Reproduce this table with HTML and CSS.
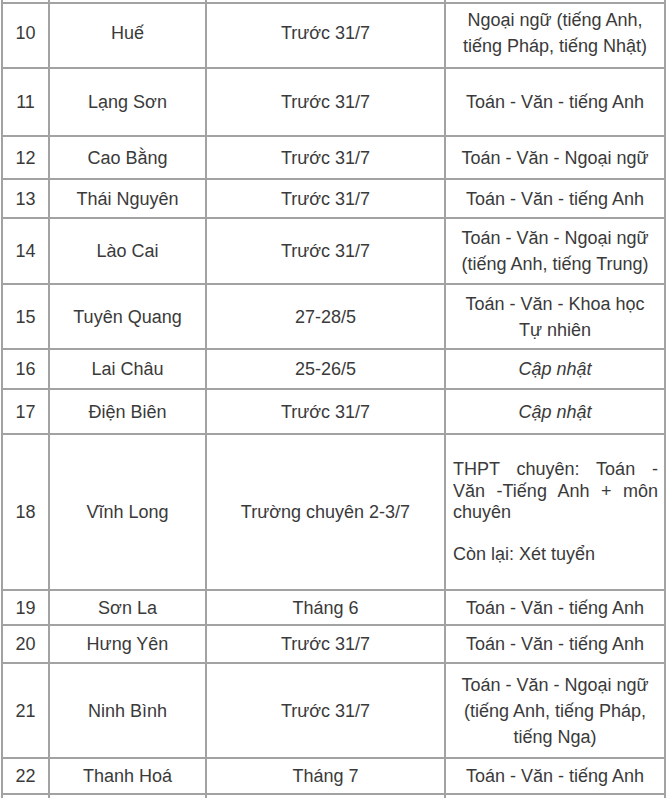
FILE: index.html
```html
<!DOCTYPE html>
<html lang="vi">
<head>
<meta charset="utf-8">
<title>Lịch thi</title>
<link rel="stylesheet" href="styles.css">
</head>
<body>
<div class="sheet">
<table class="grid">
<colgroup><col class="c1"><col class="c2"><col class="c3"><col class="c4"></colgroup>
<tbody>
<tr class="ghost"><td></td><td></td><td></td><td></td></tr>
<tr class="h65 lift"><td>10</td><td>Huế</td><td>Trước 31/7</td><td>Ngoại ngữ (tiếng Anh,<br>tiếng Pháp, tiếng Nhật)</td></tr>
<tr class="h68"><td>11</td><td>Lạng Sơn</td><td>Trước 31/7</td><td>Toán - Văn - tiếng Anh</td></tr>
<tr class="h43"><td>12</td><td>Cao Bằng</td><td>Trước 31/7</td><td>Toán - Văn - Ngoại ngữ</td></tr>
<tr class="h39"><td>13</td><td>Thái Nguyên</td><td>Trước 31/7</td><td>Toán - Văn - tiếng Anh</td></tr>
<tr class="h66"><td>14</td><td>Lào Cai</td><td>Trước 31/7</td><td>Toán - Văn - Ngoại ngữ<br>(tiếng Anh, tiếng Trung)</td></tr>
<tr class="h65"><td>15</td><td>Tuyên Quang</td><td>27-28/5</td><td>Toán - Văn - Khoa học<br>Tự nhiên</td></tr>
<tr class="h40"><td>16</td><td>Lai Châu</td><td>25-26/5</td><td><em>Cập nhật</em></td></tr>
<tr class="h45"><td>17</td><td>Điện Biên</td><td>Trước 31/7</td><td><em>Cập nhật</em></td></tr>
<tr class="h156"><td>18</td><td>Vĩnh Long</td><td>Trường chuyên 2-3/7</td><td class="left"><p class="para"><span class="jl">THPT chuyên: Toán -</span><span class="jl">Văn -Tiếng Anh + môn</span><span class="ln">chuyên</span></p><p class="para">Còn lại: Xét tuyển</p></td></tr>
<tr class="h35"><td>19</td><td>Sơn La</td><td>Tháng 6</td><td>Toán - Văn - tiếng Anh</td></tr>
<tr class="h38"><td>20</td><td>Hưng Yên</td><td>Trước 31/7</td><td>Toán - Văn - tiếng Anh</td></tr>
<tr class="h95"><td>21</td><td>Ninh Bình</td><td>Trước 31/7</td><td>Toán - Văn - Ngoại ngữ<br>(tiếng Anh, tiếng Pháp,<br>tiếng Nga)</td></tr>
<tr class="h36"><td>22</td><td>Thanh Hoá</td><td>Tháng 7</td><td>Toán - Văn - tiếng Anh</td></tr>
<tr class="ghost-end"><td></td><td></td><td></td><td></td></tr>
</tbody>
</table>
</div>
</body>
</html>
```
FILE: styles.css
```css
html, body {
  margin: 0;
  padding: 0;
  background: #ffffff;
}
body {
  font-family: "Liberation Sans", Arial, sans-serif;
  color: #3a3a3a;
}
.sheet {
  width: 669px;
  height: 798px;
  overflow: hidden;
}
.grid {
  border-collapse: collapse;
  table-layout: fixed;
  width: 663px;
  margin: -10px 0 0 1px;
  font-size: 18px;
}
.c1 { width: 47px; }
.c2 { width: 157px; }
.c3 { width: 239px; }
.c4 { width: 220px; }
.grid td {
  border: 2px solid #a2a2a2;
  text-align: center;
  vertical-align: middle;
  padding: 0 5px;
  line-height: 26px;
}
.lift td { padding-bottom: 6px; }
.grid td em { font-style: italic; }
.grid td.left {
  text-align: left;
  padding: 0 6px 0 7px;
  line-height: 21.5px;
}
.para { margin: 0; }
.para + .para { margin-top: 20px; }
.jl {
  display: block;
  text-align: justify;
  text-align-last: justify;
}
.ln { display: block; }
.ghost { height: 12px; }
.ghost-end { height: 40px; }
.h35 { height: 35px; }
.h36 { height: 36px; }
.h38 { height: 38px; }
.h39 { height: 39px; }
.h40 { height: 40px; }
.h43 { height: 43px; }
.h45 { height: 45px; }
.h65 { height: 65px; }
.h66 { height: 66px; }
.h68 { height: 68px; }
.h95 { height: 95px; }
.h156 { height: 156px; }
```
